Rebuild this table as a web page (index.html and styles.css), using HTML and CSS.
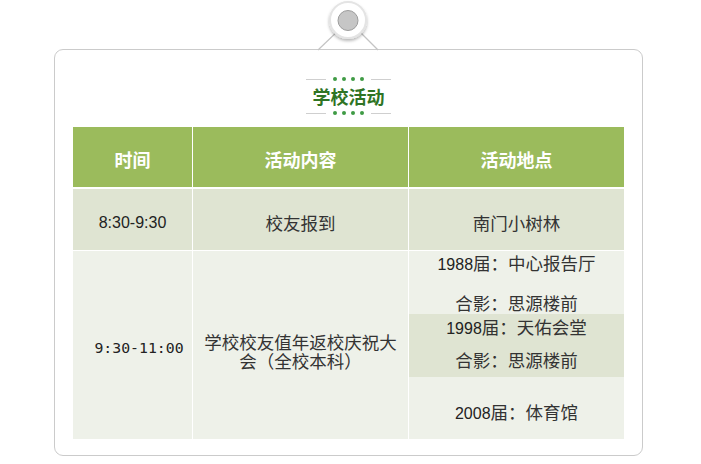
FILE: index.html
```html
<!DOCTYPE html>
<html lang="zh-CN">
<head>
<meta charset="utf-8">
<title>学校活动</title>
<link rel="stylesheet" href="styles.css">
</head>
<body>
<div class="page">
  <div class="card">
    <svg class="pin" width="80" height="51" viewBox="0 0 80 51" aria-hidden="true">
      <defs>
        <filter id="sh" x="-50%" y="-50%" width="200%" height="200%">
          <feDropShadow dx="0" dy="2" stdDeviation="1.6" flood-color="#000" flood-opacity="0.28"/>
        </filter>
      </defs>
      <line x1="10" y1="50" x2="33" y2="28" stroke="#c4c4c4" stroke-width="1.2"/>
      <line x1="70" y1="50" x2="48" y2="28" stroke="#c4c4c4" stroke-width="1.2"/>
      <circle cx="40" cy="20" r="18" fill="#fff" stroke="#e4e4e4" stroke-width="2" filter="url(#sh)"/>
      <circle cx="40" cy="20.5" r="10" fill="#c6c6c6" stroke="#9c9c9c" stroke-width="1"/>
    </svg>
    <div class="title-block">
      <div class="deco"><span class="rule"></span><span class="dots"><i></i><i></i><i></i><i></i></span><span class="rule"></span></div>
      <h2 class="title">学校活动</h2>
      <div class="deco"><span class="rule"></span><span class="dots"><i></i><i></i><i></i><i></i></span><span class="rule"></span></div>
    </div>
    <div class="schedule">
      <div class="cell head">时间</div>
      <div class="cell head">活动内容</div>
      <div class="cell head">活动地点</div>

      <div class="cell r1 time-a">8:30-9:30</div>
      <div class="cell r1">校友报到</div>
      <div class="cell r1">南门小树林</div>

      <div class="cell r2 time-b">9:30-11:00</div>
      <div class="cell r2 content">学校校友值年返校庆祝大会（全校本科）</div>
      <div class="cell sub sub1">
        <div class="ln"><span class="num">1988</span>届：中心报告厅</div>
        <div class="ln gap1">合影：思源楼前</div>
      </div>
      <div class="cell sub sub2">
        <div class="ln"><span class="num">1998</span>届：天佑会堂</div>
        <div class="ln gap2">合影：思源楼前</div>
      </div>
      <div class="cell sub sub3">
        <div class="ln"><span class="num">2008</span>届：体育馆</div>
      </div>
    </div>
  </div>
</div>
</body>
</html>
```

FILE: styles.css
```css
* { box-sizing: border-box; }

body {
  margin: 0;
  background: #fff;
  font-family: "Noto Sans CJK SC", "Noto Sans", sans-serif;
  color: #333;
}

.page {
  padding: 49px 0 0 54px;
}

.card {
  position: relative;
  width: 589px;
  height: 407px;
  border: 1px solid #cbcbcb;
  border-radius: 9px;
  padding: 0 18px 16px 18px;
}

.pin {
  position: absolute;
  left: 253px;
  top: -50px;
  display: block;
}

.title-block {
  padding-top: 27px;
  margin-bottom: 12px;
  display: flex;
  flex-direction: column;
  align-items: center;
}

.deco {
  display: flex;
  align-items: center;
  gap: 7px;
  height: 4px;
}

.rule {
  width: 20px;
  height: 1px;
  background: #cfcfcf;
}

.dots {
  display: flex;
  gap: 5px;
}

.dots i {
  width: 4px;
  height: 4px;
  border-radius: 50%;
  background: #3f9b45;
}

.title {
  margin: 3px 0;
  font-size: 18px;
  line-height: 24px;
  font-weight: 700;
  color: #2f7424;
}

.schedule {
  display: grid;
  grid-template-columns: 119px 215px 215px;
  grid-template-rows: 62px 62px 63px 63px 62px;
  column-gap: 1px;
  background: #fff;
  width: 551px;
}

.cell {
  display: flex;
  align-items: center;
  justify-content: center;
  text-align: center;
  font-size: 17.5px;
  line-height: 19px;
}

.head {
  background: #9bbb5c;
  border-bottom: 2px solid #fff;
  color: #fff;
  font-weight: 700;
  font-size: 18px;
  padding-top: 4px;
}

.r1 {
  background: #dfe4d2;
  border-bottom: 1px solid #fff;
  padding-top: 6px;
}

.time-a {
  font-family: "Liberation Sans", Arial, sans-serif;
  font-size: 16px;
  color: #222;
}

.r2 {
  grid-row: 3 / 6;
  background: #eef1e9;
}

.time-b {
  font-family: "DejaVu Sans Mono", "Liberation Mono", monospace;
  font-size: 14.8px;
  color: #222;
  padding: 4px 0 0 13px;
}

.content {
  padding: 12px 8px 0 8px;
}

.sub {
  flex-direction: column;
  justify-content: flex-start;
}

.sub .ln {
  line-height: 18px;
  white-space: nowrap;
}

.num {
  font-family: "Liberation Sans", Arial, sans-serif;
  font-size: 16px;
  color: #222;
}

.sub1 {
  background: #eef1e9;
  padding-top: 3px;
}

.sub2 {
  background: #dfe4d2;
  padding-top: 4px;
}

.sub3 {
  background: #eef1e9;
  padding-top: 25.5px;
}

.gap1 { margin-top: 20px; }
.gap2 { margin-top: 12.5px; }
```
